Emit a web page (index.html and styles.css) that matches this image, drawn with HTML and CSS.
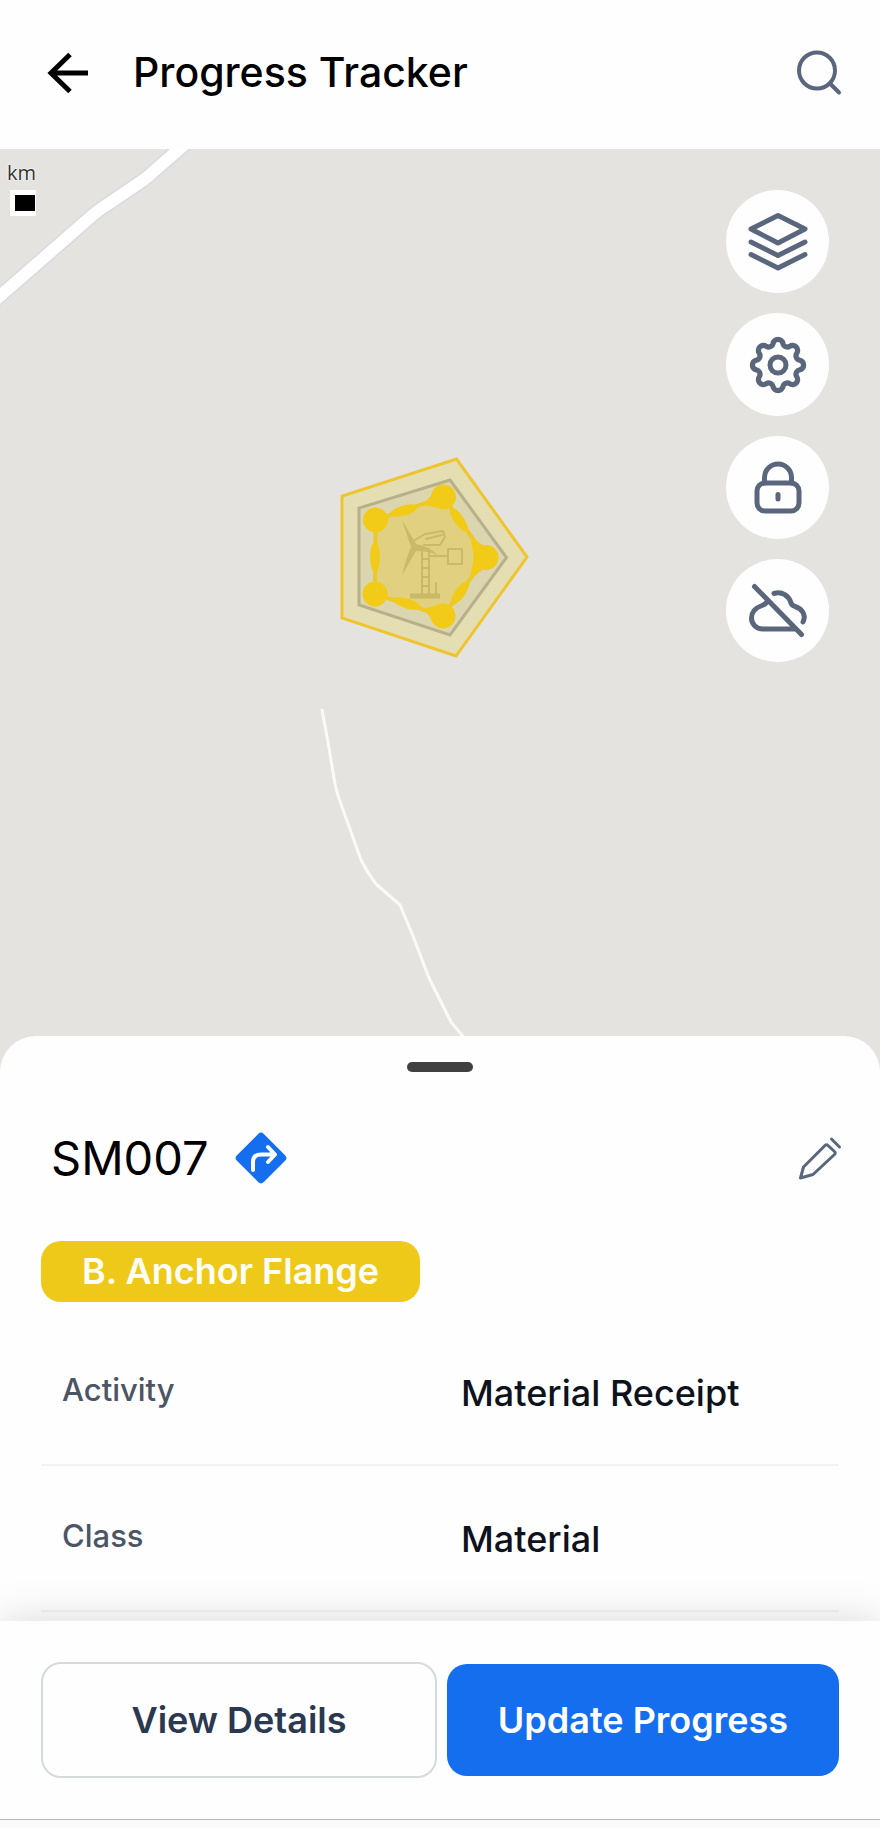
FILE: index.html
```html
<!DOCTYPE html>
<html lang="en">
<head>
    <meta charset="UTF-8">
    <meta name="viewport" content="width=device-width, initial-scale=1.0">
    <title>Progress Tracker</title>
    <link rel="stylesheet" href="styles.css">
</head>
<body>
    <header class="topbar">
        <button type="button" class="icon-button back" aria-label="Back">
            <svg viewBox="0 0 48 48"><path d="M43 24H6M25 5.500L6 24l19 18.500"/></svg>
        </button>
        <h1>Progress Tracker</h1>
        <button type="button" class="icon-button search" aria-label="Search">
            <svg viewBox="0 0 48 48"><circle cx="21" cy="21.500" r="18"/><path d="M34 34.500l9 9"/></svg>
        </button>
    </header>

    <main class="map">
        <svg class="map-canvas" viewBox="0 0 880 923" preserveAspectRatio="xMidYMid slice" aria-hidden="true">
            <!-- roads -->
            <path class="road-edge" d="M-10 155L0 147L94 65Q100 60 108 55L142 32Q148 28 154 22L192 -11"/>
            <path class="road" d="M-10 155L0 147L94 65Q100 60 108 55L142 32Q148 28 154 22L192 -11"/>
            <path class="trail" d="M322 561L328 593L335 635Q337 645 341 655L361 711Q367 723 376 735L400 756L413 787L424 816Q428 828 434 839L451 873L466 891"/>

            <!-- site boundary -->
            <path class="zone-outer" d="M456.500 310L527 408L456 507L342 469V347Z"/>
            <path class="zone-inner" d="M450 331L506.500 408.500L450 486L359 456V359Z"/>
            <path class="zone-core" d="M375.500 371L443.500 348L486 408.500L443 467L375 445Z"/>
            <g class="nodes">
                <ellipse cx="404" cy="361.500" rx="14" ry="5" transform="rotate(-16 404 361.500)"/>
                <ellipse cx="459" cy="371" rx="14" ry="5" transform="rotate(55 459 371)"/>
                <ellipse cx="460" cy="444" rx="14" ry="5" transform="rotate(-54 460 444)"/>
                <ellipse cx="407" cy="454.500" rx="14" ry="5" transform="rotate(17 407 454.500)"/>
                <ellipse cx="375" cy="408" rx="5" ry="15"/>
                <circle cx="375.500" cy="371" r="12.500"/>
                <circle cx="443.500" cy="348" r="12.500"/>
                <circle cx="486" cy="408.500" r="12.500"/>
                <circle cx="443" cy="467" r="12.500"/>
                <circle cx="375" cy="445" r="12.500"/>
                <path d="M423 356L434 343L440 359ZM424 460L434 474L440 455ZM470 387L484 397L474 408ZM470 430L484 420L474 407Z"/>
            </g>

            <!-- turbine -->
            <g class="turbine">
                <path class="blade" d="M402 371L411 398Q406 410 402 426L416 402Q428 402 438 406Q428 397 416 395Z"/>
                <path d="M415 391L425 385L443 382L445 388L440 396L424 396M426 390L442 386"/>
                <path d="M422 400V446M429 400V446M422 410H429M422 419H429M422 428H429M422 437H429"/>
                <path d="M430 407H448M448 400H462V415H448ZM436 434V445"/>
                <path class="base" d="M410 447H440"/>
            </g>
        </svg>

        <div class="scale">
            <span>km</span>
            <i></i>
        </div>

        <div class="controls">
            <button type="button" aria-label="Layers">
                <svg viewBox="0 0 64 64"><path d="M32 5.500L59 19L32 33L5 19ZM5 32L32 45.500L59 32M5 44.500L32 58L59 44.500"/></svg>
            </button>
            <button type="button" aria-label="Settings">
                <svg viewBox="0 0 64 64">
                    <path transform="translate(-1.600 -1.600) scale(1.050)" d="M27.280 11.540A4.800 4.800 0 0 1 36.720 11.540A4.200 4.200 0 0 0 43.130 14.190A4.800 4.800 0 0 1 49.810 20.870A4.200 4.200 0 0 0 52.460 27.280A4.800 4.800 0 0 1 52.460 36.720A4.200 4.200 0 0 0 49.810 43.130A4.800 4.800 0 0 1 43.130 49.810A4.200 4.200 0 0 0 36.720 52.460A4.800 4.800 0 0 1 27.280 52.460A4.200 4.200 0 0 0 20.870 49.810A4.800 4.800 0 0 1 14.190 43.130A4.200 4.200 0 0 0 11.540 36.720A4.800 4.800 0 0 1 11.540 27.280A4.200 4.200 0 0 0 14.190 20.870A4.800 4.800 0 0 1 20.870 14.190A4.200 4.200 0 0 0 27.280 11.540Z"/>
                    <circle cx="32" cy="32" r="8"/>
                </svg>
            </button>
            <button type="button" aria-label="Lock">
                <svg viewBox="0 0 64 64"><rect x="11" y="27" width="42" height="28" rx="8"/><path d="M18.500 27V21.500a13.500 13.500 0 0 1 27 0V27M32 38.500V43"/></svg>
            </button>
            <button type="button" aria-label="Offline">
                <svg viewBox="0 0 64 64"><path d="M8.500 7.500L55.500 55.500M20 24Q19 25.500 16 26.500C9 29 5.500 34 5.500 39C5.500 45 10 50 17 50H49M28 14.500C36 12 43 17 45 24Q46 26.500 49 27.500C56 29.500 60.500 36 57 43"/></svg>
            </button>
        </div>
    </main>

    <section class="sheet">
        <div class="handle"></div>
        <div class="sheet-head">
            <h2>SM007</h2>
            <a href="#" class="directions" aria-label="Directions">
                <svg viewBox="0 0 52 52">
                    <rect x="7" y="7" width="38" height="38" rx="4" transform="rotate(45 26 26)"/>
                    <path d="M18 38V30Q18 22.500 26 22.500H38M33 15L40 22.500L33 30"/>
                </svg>
            </a>
            <button type="button" class="icon-button edit" aria-label="Edit">
                <svg viewBox="0 0 48 48"><path d="M4.500 44L7.500 33L29 11.500Q30.500 10 32 11.500L38.500 17.500Q40 19 38.500 20.500L17 40.500ZM35.500 5L43.500 13"/></svg>
            </button>
        </div>
        <span class="badge">B. Anchor Flange</span>
        <table class="details">
            <tr>
                <th scope="row">Activity</th>
                <td>Material Receipt</td>
            </tr>
            <tr>
                <th scope="row">Class</th>
                <td>Material</td>
            </tr>
        </table>
    </section>

    <footer class="actions">
        <button type="button" class="secondary">View Details</button>
        <button type="button" class="primary">Update Progress</button>
    </footer>
</body>
</html>
```
FILE: styles.css
```css
body {
    margin: 0;
    min-height: 100vh;
    display: flex;
    flex-direction: column;
    box-sizing: border-box;
    padding-bottom: 8px;
    font-family: Inter, 'Liberation Sans', sans-serif;
    background-color: #fafafa;
    color: #000;
}

h1, h2 {
    margin: 0;
}

button {
    font-family: inherit;
    border: none;
    cursor: pointer;
}

svg {
    display: block;
    fill: none;
    stroke: #5a667c;
    stroke-linecap: round;
    stroke-linejoin: round;
}

.topbar {
    display: flex;
    align-items: center;
    padding: 44px 36px 48px 45px;
    background-color: #fefefe;
}

.topbar h1 {
    flex: 1;
    margin-left: 40px;
    font-size: 41px;
    line-height: 57px;
    font-weight: 500;
}

.icon-button {
    width: 48px;
    height: 48px;
    padding: 0;
    background: none;
}

.back svg {
    stroke: #000;
    stroke-width: 5;
    stroke-linecap: butt;
    stroke-linejoin: miter;
}

.search svg {
    stroke-width: 4;
}

.edit svg {
    stroke-width: 3;
}

/* map */
.map {
    position: relative;
    flex: 1 0 auto;
    overflow: hidden;
    padding: 41px 51px;
    background-color: #e4e3df;
}

.map-canvas {
    position: absolute;
    top: 0;
    left: 0;
    width: 100%;
    height: 100%;
}

.road-edge {
    stroke: #d9d9e2;
    stroke-width: 15;
}

.road {
    stroke: #fff;
    stroke-width: 12;
}

.trail {
    stroke: #fafaf7;
    stroke-width: 3;
}

.zone-outer {
    fill: #e5deb3;
    stroke: #eec52c;
    stroke-width: 3;
    stroke-linejoin: miter;
}

.zone-inner {
    fill: #dbd6b0;
    stroke: #b8b08a;
    stroke-width: 3;
    stroke-linejoin: miter;
}

.zone-core {
    fill: #e0d07f;
    stroke: #ecc828;
    stroke-width: 4;
}

.nodes {
    fill: #f1cb18;
    stroke: none;
}

.turbine {
    stroke: #c9b968;
    stroke-width: 2;
}

.blade {
    fill: #c9b968;
    stroke: none;
}

.base {
    stroke-width: 5;
    stroke-linecap: butt;
}

.scale {
    position: absolute;
    top: 12px;
    left: 10px;
    width: 26px;
}

.scale span {
    display: flex;
    justify-content: flex-end;
    font-family: 'Open Sans', sans-serif;
    font-size: 20px;
    line-height: 24px;
    color: #333;
    text-shadow: 0 0 2px #fff, 0 0 2px #fff;
}

.scale i {
    display: block;
    height: 16px;
    margin-top: 5px;
    border: 5px solid #fff;
    border-right-width: 1px;
    background-color: #000;
}

.controls {
    position: relative;
    display: flex;
    flex-direction: column;
    align-items: flex-end;
    gap: 20px;
}

.controls button {
    display: flex;
    align-items: center;
    justify-content: center;
    width: 103px;
    height: 103px;
    padding: 0;
    border-radius: 50%;
    background-color: #fefefe;
}

.controls svg {
    width: 64px;
    height: 64px;
    stroke-width: 5;
}

/* bottom sheet */
.sheet {
    position: relative;
    margin-top: -36px;
    padding: 26px 0 9px;
    border-radius: 36px 36px 0 0;
    background-color: #fefefe;
}

.handle {
    width: 66px;
    height: 10px;
    margin: 0 auto 56px;
    border-radius: 5px;
    background-color: #404040;
}

.sheet-head {
    display: flex;
    align-items: center;
    padding: 0 36px 0 51px;
    margin-bottom: 53px;
}

.sheet-head h2 {
    font-size: 47px;
    line-height: 60px;
    font-weight: 400;
}

.directions {
    margin-left: 26px;
    margin-right: auto;
}

.directions svg {
    width: 52px;
    height: 52px;
    stroke: #fff;
    stroke-width: 4;
}

.directions rect {
    fill: #146eee;
    stroke: none;
}

.badge {
    display: block;
    width: fit-content;
    margin: 0 41px 18px;
    padding: 0 41px;
    border-radius: 20px;
    background-color: #efc919;
    color: #fffef5;
    font-size: 36px;
    line-height: 61px;
    font-weight: 600;
}

.details {
    width: calc(100% - 82px);
    margin: 0 41px;
    border-collapse: collapse;
    table-layout: fixed;
    text-align: left;
}

.details tr {
    border-bottom: 2px solid #f3f3f5;
}

.details th,
.details td {
    padding: 46px 21px 44px;
    vertical-align: top;
    font-weight: 500;
}

.details th {
    color: #4b5565;
    font-size: 31px;
    line-height: 48px;
}

.details td {
    color: #0d121c;
    font-size: 36px;
    line-height: 54px;
}

/* footer */
.actions {
    position: relative;
    display: flex;
    align-items: center;
    gap: 10px;
    padding: 41px;
    border-bottom: 1px solid #b8b8b8;
    background-color: #fefefe;
    box-shadow: 0 0 40px rgba(0, 0, 0, 0.15);
    clip-path: inset(-60px 0 0 0);
}

.actions button {
    flex: 1;
    box-sizing: content-box;
    height: 112px;
    padding: 0;
    border-radius: 20px;
    font-size: 36px;
    font-weight: 600;
}

.secondary {
    border: 2px solid #d5dadd;
    background-color: #fefefe;
    color: #2a3850;
}

.primary {
    background-color: #146eee;
    color: #fff;
}
```
